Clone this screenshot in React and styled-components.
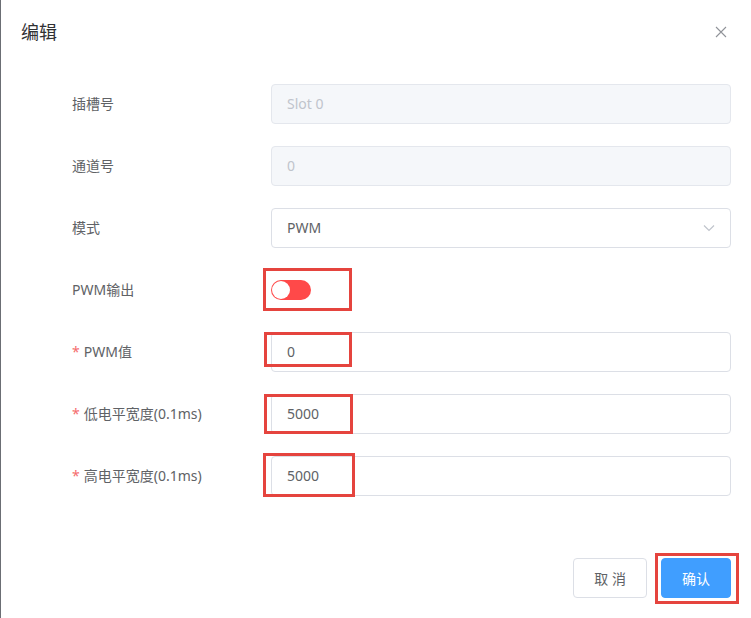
import React from "react";
import styled, { createGlobalStyle } from "styled-components";

const Global = createGlobalStyle`
  html, body { margin: 0; padding: 0; background: #fff; }
  body { font-family: "Noto Sans", "Noto Sans CJK SC", sans-serif; }
  * { box-sizing: border-box; }
`;

const Dialog = styled.div`
  width: 751px;
  height: 618px;
  background: #fff;
  border-left: 1px solid #6b6e74;
  display: flex;
  flex-direction: column;
`;

const Header = styled.div`
  display: flex;
  align-items: center;
  justify-content: space-between;
  padding: 20px 20px 10px 20px;
`;

const Title = styled.span`
  font-size: 18px;
  line-height: 24px;
  color: #303133;
`;

const Close = styled.button`
  border: none;
  background: none;
  padding: 0;
  width: 16px;
  height: 16px;
  display: flex;
  align-items: center;
  justify-content: center;
  margin-right: 2px;
  cursor: pointer;
`;

const Body = styled.div`
  padding: 30px 20px 30px 71px;
  display: flex;
  flex-direction: column;
  gap: 22px;
`;

const Row = styled.div`
  display: flex;
  align-items: center;
  height: 40px;
`;

const Label = styled.label`
  width: 199px;
  font-size: 14px;
  line-height: 40px;
  color: #606266;
  white-space: nowrap;
`;

const Star = styled.span`
  color: #f56c6c;
  margin-right: 4px;
`;

const Control = styled.div`
  position: relative;
  width: 460px;
  height: 40px;
  display: flex;
  align-items: center;
`;

const Input = styled.div`
  width: 100%;
  height: 40px;
  border: 1px solid ${(p) => (p.$disabled ? "#e4e7ed" : "#dcdfe6")};
  background: ${(p) => (p.$disabled ? "#f5f7fa" : "#fff")};
  color: ${(p) => (p.$disabled ? "#c0c4cc" : "#606266")};
  border-radius: 4px;
  padding: 0 15px;
  font-size: 14px;
  line-height: 38px;
  display: flex;
  align-items: center;
  justify-content: space-between;
`;

const Switch = styled.span`
  width: 40px;
  height: 20px;
  border-radius: 10px;
  background: #ff4949;
  position: relative;
  display: inline-block;
  &::after {
    content: "";
    position: absolute;
    left: 1px;
    top: 1px;
    width: 18px;
    height: 18px;
    border-radius: 50%;
    background: #fff;
  }
`;

const Mark = styled.span`
  position: absolute;
  left: ${(p) => p.$l}px;
  top: ${(p) => p.$t}px;
  width: ${(p) => p.$w}px;
  height: ${(p) => p.$h}px;
  border: 3px solid #e5443e;
  pointer-events: none;
`;

const Footer = styled.div`
  margin-top: auto;
  padding: 0 20px 20px 20px;
  display: flex;
  justify-content: flex-end;
  gap: 14px;
`;

const BtnWrap = styled.div`
  position: relative;
`;

const Button = styled.button`
  height: 40px;
  padding: 0 20px;
  border-radius: 4px;
  font-family: inherit;
  font-size: 14px;
  border: 1px solid ${(p) => (p.$primary ? "#409eff" : "#dcdfe6")};
  background: ${(p) => (p.$primary ? "#409eff" : "#fff")};
  color: ${(p) => (p.$primary ? "#fff" : "#606266")};
`;

const Chevron = () => (
  <svg width="12" height="8" viewBox="0 0 12 8" fill="none">
    <path d="M1 1.5 L6 6.5 L11 1.5" stroke="#c0c4cc" strokeWidth="1.2" />
  </svg>
);

export default function App() {
  return (
    <>
      <Global />
      <Dialog>
        <Header>
          <Title>编辑</Title>
          <Close aria-label="close">
            <svg width="12" height="12" viewBox="0 0 12 12">
              <path d="M1 1 L11 11 M11 1 L1 11" stroke="#909399" strokeWidth="1.1" />
            </svg>
          </Close>
        </Header>
        <Body>
          <Row>
            <Label>插槽号</Label>
            <Control>
              <Input $disabled>Slot 0</Input>
            </Control>
          </Row>
          <Row>
            <Label>通道号</Label>
            <Control>
              <Input $disabled>0</Input>
            </Control>
          </Row>
          <Row>
            <Label>模式</Label>
            <Control>
              <Input>
                <span>PWM</span>
                <Chevron />
              </Input>
            </Control>
          </Row>
          <Row>
            <Label>PWM输出</Label>
            <Control>
              <Switch />
              <Mark $l={-8} $t={-2} $w={89} $h={43} />
            </Control>
          </Row>
          <Row>
            <Label>
              <Star>*</Star>PWM值
            </Label>
            <Control>
              <Input>0</Input>
              <Mark $l={-7} $t={0} $w={88} $h={35} />
            </Control>
          </Row>
          <Row>
            <Label>
              <Star>*</Star>低电平宽度(0.1ms)
            </Label>
            <Control>
              <Input>5000</Input>
              <Mark $l={-7} $t={0} $w={89} $h={40} />
            </Control>
          </Row>
          <Row>
            <Label>
              <Star>*</Star>高电平宽度(0.1ms)
            </Label>
            <Control>
              <Input>5000</Input>
              <Mark $l={-8} $t={-3} $w={92} $h={44} />
            </Control>
          </Row>
        </Body>
        <Footer>
          <Button>取 消</Button>
          <BtnWrap>
            <Button $primary>确认</Button>
            <Mark $l={-6} $t={-5} $w={84} $h={51} />
          </BtnWrap>
        </Footer>
      </Dialog>
    </>
  );
}
